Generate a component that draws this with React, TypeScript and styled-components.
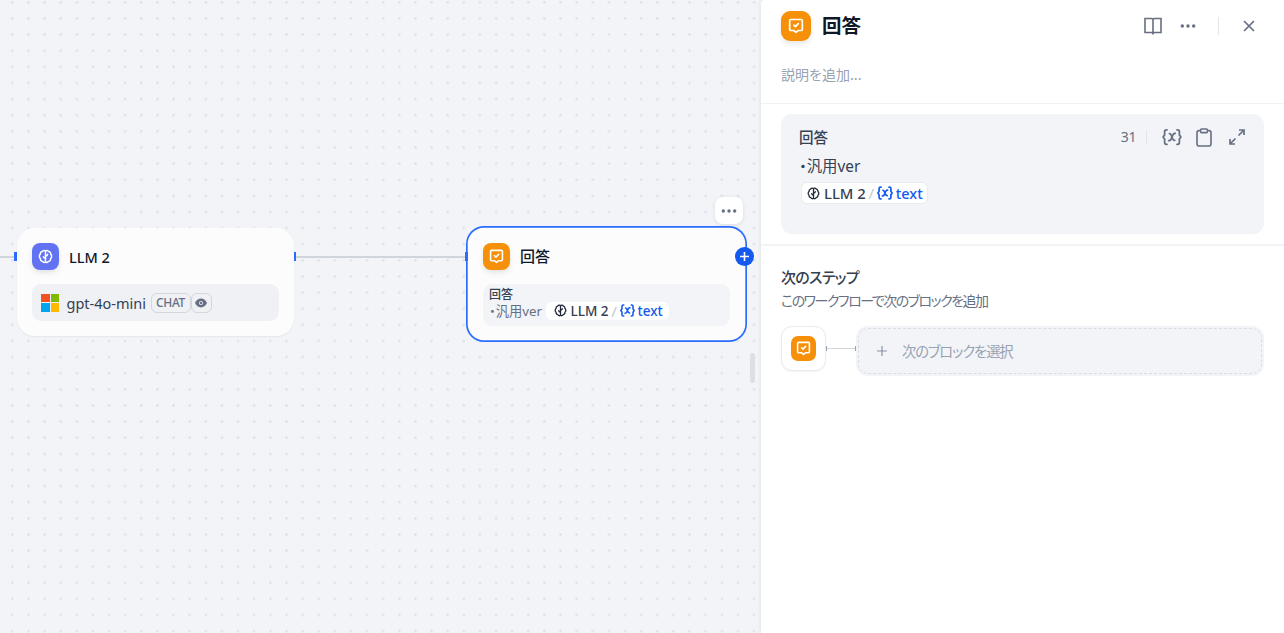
import React from "react";
import styled, { createGlobalStyle, css } from "styled-components";

const GlobalStyle = createGlobalStyle`
  * { box-sizing: border-box; }
  body {
    margin: 0;
    overflow: hidden;
    font-family: "Noto Sans", "Noto Sans CJK JP", sans-serif;
    color: #101828;
  }
  svg { display: block; flex: none; }
`;

const Screen = styled.div`
  display: flex;
  width: 1284px;
  height: 633px;
  overflow: hidden;
  background: #f2f4f8;
`;

/* ---------- shared ---------- */

const Text = styled.span<{ $size: number; $color?: string; $weight?: number; $spacing?: number; $line?: number; $gap?: number }>`
  font-size: ${(p) => p.$size}px;
  line-height: ${(p) => p.$line ?? 20}px;
  font-weight: ${(p) => p.$weight ?? 400};
  color: ${(p) => p.$color ?? "#354052"};
  letter-spacing: ${(p) => p.$spacing ?? 0}px;
  margin-left: ${(p) => p.$gap ?? 0}px;
  white-space: nowrap;
`;

const KanaText = styled(Text)`
  font-family: "Noto Sans CJK JP", sans-serif;
  font-feature-settings: "palt";
`;

/* The middle dot takes its half-width form. */
const BulletText = styled(Text)`
  font-feature-settings: "halt";
`;

const BlockIcon = styled.div<{ $size: number; $radius: number; $color: string; $flat?: boolean }>`
  display: flex;
  align-items: center;
  justify-content: center;
  flex: none;
  width: ${(p) => p.$size}px;
  height: ${(p) => p.$size}px;
  border-radius: ${(p) => p.$radius}px;
  background: ${(p) => p.$color};
  color: #fff;
  ${(p) => !p.$flat && css`box-shadow: 0 3px 6px -1px rgba(9, 9, 11, 0.12);`}
`;

const AnswerGlyph = ({ size }: { size: number }) => (
  <svg width={size} height={size} viewBox="0 0 16 16" fill="none" stroke="currentColor" strokeWidth="1.7" strokeLinecap="round" strokeLinejoin="round">
    <path d="M2.700 1.500h10.600c.6 0 1 .4 1 1v9c0 .6-.4 1-1 1h-3L8 14.300l-2.300-1.800h-3c-.6 0-1-.4-1-1v-9c0-.6.4-1 1-1Z" />
    <path d="m5.900 7.200 1.500 1.500 2.900-3" />
  </svg>
);

const BrainGlyph = ({ size }: { size: number }) => (
  <svg width={size} height={size} viewBox="0 0 16 16" fill="none" stroke="currentColor" strokeWidth="1.6" strokeLinecap="round" strokeLinejoin="round">
    <path d="M8 2.200C7.300 1.200 5.300 1.200 4.700 2.600 3.300 2.700 2.300 4 2.700 5.300 1.100 6.100 1 9.100 2.600 10.200c-.3 1.600.8 2.900 2.300 3 .7 1.400 2.500 1.600 3.100.6Z" />
    <path d="M8 2.200c.7-1 2.700-1 3.300.4 1.400.1 2.400 1.400 2 2.700 1.600.8 1.700 3.800.1 4.900.3 1.600-.8 2.900-2.300 3-.7 1.400-2.500 1.600-3.100.6" />
    <path d="M8 9.900c-1.300 0-2.100-.6-2.200-1.700M8 7.400c1.300 0 2.100-.6 2.200-1.700" />
  </svg>
);

const VariableGlyph = ({ size, weight = 1.4 }: { size: number; weight?: number }) => (
  <svg width={size} height={size} viewBox="0 0 16 16" fill="none" stroke="currentColor" strokeWidth={weight} strokeLinecap="round" strokeLinejoin="round">
    <path d="M4 2.200h-.5c-.9 0-1.400.5-1.400 1.400v2.700L.9 8l1.200 1.700v2.700c0 .9.5 1.400 1.400 1.400H4" />
    <path d="M12 2.200h.5c.9 0 1.400.5 1.400 1.400v2.700L15.100 8l-1.200 1.700v2.700c0 .9-.5 1.400-1.400 1.400H12" />
    <path d="M5.400 10.900c1.300.3 1.900-.6 2.600-2.900s1.200-3.200 2.600-2.900M6 5.300c1.900-.4 1.800 5.700 4.200 5.400" />
  </svg>
);

const DotsGlyph = () => (
  <svg width="16" height="6" viewBox="0 0 16 6" fill="currentColor">
    <circle cx="2.300" cy="3" r="1.700" />
    <circle cx="8" cy="3" r="1.700" />
    <circle cx="13.700" cy="3" r="1.700" />
  </svg>
);

/* ---------- canvas ---------- */

const Canvas = styled.main`
  position: relative;
  flex: none;
  width: 761px;
  height: 633px;
  background-color: #f2f4f8;
  background-image: radial-gradient(circle at 8px 8px, #dfe2e8 0.9px, rgba(223, 226, 232, 0) 1.700px);
  background-size: 16.13px 16.13px;
  background-position: 4.300px -5.700px;
`;

const Edge = styled.div<{ $x: number; $width: number }>`
  position: absolute;
  left: ${(p) => p.$x}px;
  top: 256px;
  width: ${(p) => p.$width}px;
  height: 2px;
  background: #d0d5dc;
`;

const Handle = styled.div<{ $x: number }>`
  position: absolute;
  left: ${(p) => p.$x}px;
  top: 252px;
  width: 3px;
  height: 9px;
  background: #296dff;
`;

const Node = styled.section<{ $x: number; $y: number; $w: number; $h: number; $selected?: boolean }>`
  position: absolute;
  left: ${(p) => p.$x}px;
  top: ${(p) => p.$y}px;
  width: ${(p) => p.$w}px;
  height: ${(p) => p.$h}px;
  display: flex;
  flex-direction: column;
  padding: 15px;
  border-radius: 18px;
  background: #fcfcfd;
  box-shadow: 0 1px 2px rgba(16, 24, 40, 0.06);
  ${(p) =>
    p.$selected &&
    css`
      padding: 16.600px;
      box-shadow: inset 0 0 0 1.700px #296dff;
    `}
`;

const NodeHeader = styled.header`
  display: flex;
  align-items: center;
  gap: 10px;
  height: 27px;
  margin-bottom: 14px;
`;

const ModelRow = styled.div`
  display: flex;
  align-items: center;
  height: 37px;
  padding-left: 9px;
  border-radius: 9px;
  background: #eff1f5;
`;

const MicrosoftLogo = styled.div`
  display: grid;
  flex: none;
  grid-template-columns: 8.500px 8.500px;
  gap: 1px;
  grid-template-rows: 8.500px 8.500px;
  margin-right: 7.500px;
`;
const Tile = styled.i<{ $color: string }>`
  background: ${(p) => p.$color};
`;

const ModelName = styled(Text)`
  width: 84px;
`;

const Badge = styled.div<{ $w: number }>`
  display: flex;
  align-items: center;
  justify-content: center;
  width: ${(p) => p.$w}px;
  height: 20px;
  border: 1px solid #d3d6dc;
  border-radius: 6px;
  color: #676f83;
`;

const AnswerBody = styled.div`
  display: flex;
  flex-direction: column;
  height: 42px;
  padding: 4px 6px 0;
  border-radius: 9px;
  background: #f2f4f8;
`;

const InlineRow = styled.div`
  display: flex;
  align-items: center;
  gap: 4px;
`;

const VariableChip = styled.span<{ $w: number; $h: number; $pad: number; $outlined?: boolean }>`
  display: flex;
  align-items: center;
  width: ${(p) => p.$w}px;
  height: ${(p) => p.$h}px;
  padding-left: ${(p) => p.$pad}px;
  border-radius: 6px;
  background: #fff;
  border: ${(p) => (p.$outlined ? "1px solid #e9ebf0" : "0")};
  color: #202939;
`;
const Slash = styled.span`
  width: 11px;
  text-align: center;
  font-size: 15px;
  line-height: 18px;
  color: #c3c8d1;
`;
const Blue = styled.span`
  display: flex;
  align-items: center;
  gap: 3px;
  color: #155aef;
`;

const NodeMenu = styled.button`
  position: absolute;
  left: 715px;
  top: 197px;
  width: 28px;
  height: 27px;
  display: flex;
  align-items: center;
  justify-content: center;
  padding: 0;
  border: 0;
  border-radius: 8px;
  background: #fff;
  color: #676f83;
  box-shadow: 0 1px 4px rgba(16, 24, 40, 0.1);
`;

const AddButton = styled.button`
  position: absolute;
  left: 735px;
  top: 247px;
  width: 19px;
  height: 19px;
  padding: 0;
  display: flex;
  align-items: center;
  justify-content: center;
  border: 0;
  border-radius: 50%;
  background: #155aef;
`;

const ResizeGrip = styled.div`
  position: absolute;
  left: 750px;
  top: 353px;
  width: 5px;
  height: 30px;
  border-radius: 3px;
  background: #dddfe4;
`;

/* ---------- side panel ---------- */

const Panel = styled.aside`
  position: relative;
  flex: 1;
  display: flex;
  flex-direction: column;
  background: #fff;
  border-top-left-radius: 4px;
  box-shadow: 0 0 5px rgba(16, 24, 40, 0.09);
`;

const PanelTop = styled.header`
  height: 104px;
  padding: 11px 29px 0 20px;
  border-bottom: 1px solid #f0f1f3;
`;
const TitleRow = styled.div`
  display: flex;
  align-items: center;
  height: 30px;
  margin-bottom: 22px;
`;
const Actions = styled.div`
  display: flex;
  align-items: center;
  margin-left: auto;
  color: #676f83;
`;
const Rule = styled.i<{ $h: number; $left: number; $right: number }>`
  width: 1px;
  height: ${(p) => p.$h}px;
  margin: 0 ${(p) => p.$right}px 0 ${(p) => p.$left}px;
  background: #e3e5ea;
`;
const Spacer = styled.i<{ $w: number }>`
  width: ${(p) => p.$w}px;
`;

const EditorSection = styled.section`
  height: 142px;
  padding: 10px 20px 0;
  border-bottom: 2px solid #f2f3f5;
`;
const Editor = styled.div`
  width: 483px;
  height: 120px;
  padding: 13px 19px 0 18px;
  border-radius: 11px;
  background: #f2f4f8;
`;
const EditorHead = styled.div`
  display: flex;
  align-items: center;
  height: 20px;
  margin-bottom: 10px;
`;
const EditorLine = styled.div<{ $indent?: number }>`
  display: flex;
  align-items: center;
  height: 20px;
  margin-bottom: 6px;
  padding-left: ${(p) => p.$indent ?? 0}px;
`;

const NextSection = styled.section`
  display: flex;
  flex-direction: column;
  padding: 20px 20px 0;
`;
const NextRow = styled.div`
  display: flex;
  align-items: flex-start;
  margin-top: 14px;
`;
const SourceCard = styled.div`
  display: flex;
  align-items: center;
  justify-content: center;
  width: 45px;
  height: 45px;
  border: 1px solid #e9ebef;
  border-radius: 11px;
  background: #fff;
  box-shadow: 0 1px 2px rgba(16, 24, 40, 0.05);
`;
const Connector = styled.div`
  display: flex;
  align-items: center;
  width: 30px;
  height: 45px;
`;
const Cap = styled.i`
  width: 1px;
  height: 5px;
  background: #98a2b2;
`;
const Wire = styled.i`
  flex: 1;
  height: 1px;
  background: #d0d5dc;
`;
const NextSlot = styled.div`
  width: 408px;
  height: 50px;
  padding: 2px;
  border-radius: 12px;
  background: #f2f4f8;
`;
const NextButton = styled.div`
  display: flex;
  align-items: center;
  gap: 14px;
  height: 46px;
  padding: 0 0 1px 17px;
  border: 1px dashed #d9dce3;
  border-radius: 10px;
  color: #8a94a6;
`;

const Reference = ({ compact }: { compact?: boolean }) => (
  <VariableChip $w={compact ? 123 : 127} $h={compact ? 18 : 22} $pad={compact ? 8.5 : 5} $outlined={!compact}>
    <BrainGlyph size={13} />
    <Text $size={compact ? 13.5 : 14.8} $weight={500} $line={18} $gap={compact ? 3 : 4}>LLM 2</Text>
    <Slash>/</Slash>
    <Blue>
      <VariableGlyph size={compact ? 15 : 16} weight={1.700} />
      <Text $size={compact ? 13.5 : 14.5} $weight={500} $color="#155aef" $line={18}>text</Text>
    </Blue>
  </VariableChip>
);

export default function App() {
  return (
    <>
      <GlobalStyle />
      <Screen>
        <Canvas>
          <Edge $x={0} $width={15} />
          <Edge $x={295} $width={172} />
          <Handle $x={14} />
          <Handle $x={293.3} />

          <Node $x={17} $y={228} $w={276.5} $h={108}>
            <NodeHeader>
              <BlockIcon $size={27} $radius={8} $color="#6172f3"><BrainGlyph size={15} /></BlockIcon>
              <Text $size={14.5} $weight={500} $color="#101828">LLM 2</Text>
            </NodeHeader>
            <ModelRow>
              <MicrosoftLogo>
                <Tile $color="#f25022" /><Tile $color="#7fba00" /><Tile $color="#00a4ef" /><Tile $color="#ffb900" />
              </MicrosoftLogo>
              <ModelName $size={14.5}>gpt-4o-mini</ModelName>
              <Badge $w={40}>
                <Text $size={12} $color="#676f83" $weight={500} $spacing={-0.3} $line={16}>CHAT</Text>
              </Badge>
              <Badge $w={21}>
                <svg width="12" height="10" viewBox="0 0 12 10" fill="currentColor">
                  <path fillRule="evenodd" d="M0 5C1.200 2.200 3.300.600 6 .600S10.800 2.200 12 5C10.800 7.800 8.700 9.400 6 9.400S1.200 7.800 0 5Zm6-2a2 2 0 1 0 0 4 2 2 0 0 0 0-4Z" />
                  <circle cx="6" cy="5" r="1.200" />
                </svg>
              </Badge>
            </ModelRow>
          </Node>

          <Node $x={466.4} $y={226.4} $w={280.2} $h={116} $selected>
            <NodeHeader>
              <BlockIcon $size={27} $radius={8} $color="#f79009"><AnswerGlyph size={15} /></BlockIcon>
              <Text $size={15} $weight={500} $color="#101828">回答</Text>
            </NodeHeader>
            <AnswerBody>
              <Text $size={12} $weight={500} $line={14}>回答</Text>
              <InlineRow>
                <BulletText $size={13.3} $color="#676f83" $line={18}>・汎用ver</BulletText>
                <Reference compact />
              </InlineRow>
            </AnswerBody>
          </Node>
          <Handle $x={465} />

          <NodeMenu><DotsGlyph /></NodeMenu>
          <AddButton>
            <svg width="9" height="9" viewBox="0 0 9 9" stroke="#fff" strokeWidth="1.600"><path d="M4.500 0v9M0 4.500h9" /></svg>
          </AddButton>
          <ResizeGrip />
        </Canvas>

        <Panel>
          <PanelTop>
            <TitleRow>
              <BlockIcon $size={30} $radius={9} $color="#f79009"><AnswerGlyph size={16} /></BlockIcon>
              <Text $size={19.5} $weight={600} $line={30} $color="#101828" $gap={11}>回答</Text>
              <Actions>
                <svg width="18" height="18" viewBox="0 0 18 18" fill="none" stroke="currentColor" strokeWidth="1.600">
                  <path d="M9 2.500v15M9 2.500 8 1.500H1v14h7l1 1 1-1h7v-14h-7Z" />
                </svg>
                <Spacer $w={18} />
                <DotsGlyph />
                <Rule $h={18} $left={22} $right={24} />
                <svg width="12" height="12" viewBox="0 0 12 12" stroke="currentColor" strokeWidth="1.700"><path d="m1 1 10 10M11 1 1 11" /></svg>
              </Actions>
            </TitleRow>
            <KanaText $size={14} $color="#98a2b2">説明を追加...</KanaText>
          </PanelTop>

          <EditorSection>
            <Editor>
              <EditorHead>
                <Text $size={14.5} $weight={500}>回答</Text>
                <Actions>
                  <Text $size={14} $color="#676f83" $spacing={-0.4}>31</Text>
                  <Rule $h={15} $left={10} $right={15} />
                  <VariableGlyph size={20} />
                  <Spacer $w={14} />
                  <svg width="16" height="19" viewBox="0 0 16 19" fill="none" stroke="currentColor" strokeWidth="1.600">
                    <path d="M4.500 2.500H3.300C1.800 2.500 1 3.300 1 4.800v10.900c0 1.500.8 2.300 2.300 2.300h9.400c1.500 0 2.300-.8 2.300-2.300V4.800c0-1.500-.8-2.300-2.300-2.300h-1.200" />
                    <rect x="4.500" y="1" width="7" height="3.600" rx="1.200" />
                  </svg>
                  <Spacer $w={17} />
                  <svg width="16" height="16" viewBox="0 0 16 16" fill="none" stroke="currentColor" strokeWidth="1.700">
                    <path d="M10 1H15v5M15 1 9.500 6.500M6 15H1v-5M1 15l5.500-5.500" />
                  </svg>
                </Actions>
              </EditorHead>
              <EditorLine><BulletText $size={15.4}>・汎用ver</BulletText></EditorLine>
              <EditorLine $indent={2}><Reference /></EditorLine>
            </Editor>
          </EditorSection>

          <NextSection>
            <KanaText $size={15} $weight={500} $line={22} $spacing={-0.7}>次のステップ</KanaText>
            <KanaText $size={14} $color="#676f83" $line={24} $spacing={-1.5}>このワークフローで次のブロックを追加</KanaText>
            <NextRow>
              <SourceCard><BlockIcon $size={25} $radius={7} $color="#f79009" $flat><AnswerGlyph size={15} /></BlockIcon></SourceCard>
              <Connector><Cap /><Wire /><Cap /></Connector>
              <NextSlot>
                <NextButton>
                  <svg width="12" height="12" viewBox="0 0 12 12" stroke="currentColor" strokeWidth="1.200"><path d="M6 1v10M1 6h10" /></svg>
                  <KanaText $size={14.3} $color="#98a2b2" $spacing={-1.1}>次のブロックを選択</KanaText>
                </NextButton>
              </NextSlot>
            </NextRow>
          </NextSection>
        </Panel>
      </Screen>
    </>
  );
}
